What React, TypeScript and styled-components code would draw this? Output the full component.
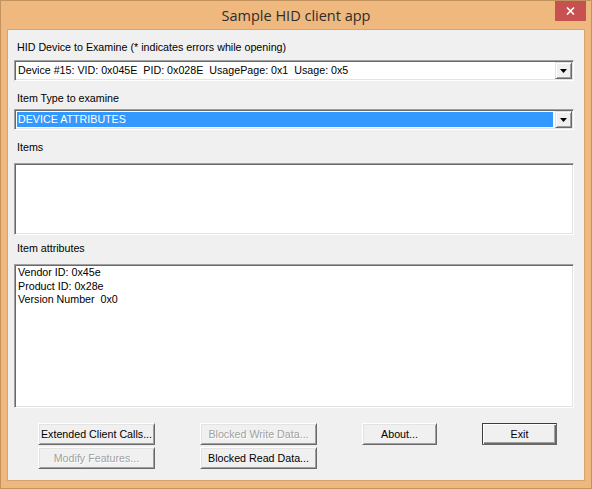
import React from "react";
import styled, { createGlobalStyle } from "styled-components";

const GlobalStyle = createGlobalStyle`
  html, body {
    margin: 0;
    padding: 0;
    background: #ffffff;
  }
  body {
    font-family: "Liberation Sans", Arial, sans-serif;
    font-size: 10.7px;
    color: #000000;
  }
`;

const StyledWindow = styled.div`
  width: 592px;
  height: 489px;
  box-sizing: border-box;
  border: 1px solid #c2925f;
  background: #eeb87e;
  display: flex;
  flex-direction: column;
  padding: 0 6px 7px;
`;

const StyledTitleBar = styled.div`
  height: 28px;
  flex: none;
  display: grid;
  grid-template-columns: 1fr auto 1fr;
  align-items: start;
`;

const StyledTitle = styled.div`
  grid-column: 2;
  font-family: "Open Sans", "Noto Sans", sans-serif;
  font-size: 14.5px;
  color: #2d2d2d;
  padding-top: 5px;
  line-height: 20px;
`;

const StyledClose = styled.div`
  grid-column: 3;
  justify-self: end;
  width: 31px;
  height: 20px;
  margin-right: -1px;
  background: #c75050;
  display: flex;
  align-items: center;
  justify-content: center;
`;

const StyledClient = styled.div`
  flex: 1;
  border: 1px solid #d4a571;
  background: #f0f0f0;
  display: flex;
  flex-direction: column;
  padding: 0 10px 0 6px;
`;

type LabelProp = { top: number };

const StyledLabel = styled.div<LabelProp>`
  margin-top: ${({ top }) => top}px;
  margin-left: 3px;
  height: 14px;
  line-height: 14px;
  white-space: pre;
`;

const StyledCombo = styled.div<{ top: number }>`
  margin-top: ${({ top }) => top}px;
  height: 21px;
  box-sizing: border-box;
  display: flex;
  background: #ffffff;
  border-top: 1px solid #a0a0a0;
  border-left: 1px solid #a0a0a0;
  border-right: 1px solid #ffffff;
  border-bottom: 1px solid #ffffff;
  box-shadow: inset 1px 1px 0 #696969, inset -1px -1px 0 #e3e3e3;
  padding: 1px;
`;

const StyledComboText = styled.div<{ selected?: boolean }>`
  flex: 1;
  margin: 1px 2px 1px 1px;
  padding-left: 1px;
  line-height: 15px;
  white-space: pre;
  background: ${({ selected }) => (selected ? "#3399ff" : "transparent")};
  color: ${({ selected }) => (selected ? "#ffffff" : "#000000")};
`;

const StyledArrowBtn = styled.div`
  width: 17px;
  height: 17px;
  box-sizing: border-box;
  background: #f0f0f0;
  border-top: 1px solid #e3e3e3;
  border-left: 1px solid #e3e3e3;
  border-right: 1px solid #696969;
  border-bottom: 1px solid #696969;
  box-shadow: inset 1px 1px 0 #ffffff, inset -1px -1px 0 #a0a0a0;
  display: flex;
  align-items: center;
  justify-content: center;
`;

const StyledList = styled.div<{ top: number; h: number }>`
  margin-top: ${({ top }) => top}px;
  height: ${({ h }) => h}px;
  box-sizing: border-box;
  background: #ffffff;
  border-top: 1px solid #a0a0a0;
  border-left: 1px solid #a0a0a0;
  border-right: 1px solid #ffffff;
  border-bottom: 1px solid #ffffff;
  box-shadow: inset 1px 1px 0 #696969, inset -1px -1px 0 #e3e3e3;
  padding: 1px 3px;
  line-height: 13.5px;
  white-space: pre;
`;

const StyledButtons = styled.div`
  margin-top: 15px;
  display: flex;
  gap: 45px;
  padding-left: 24px;
`;

const StyledColumn = styled.div`
  display: flex;
  flex-direction: column;
  gap: 2px;
`;

type BtnProp = { w: number; disabled?: boolean; isDefault?: boolean };

const StyledButton = styled.div<BtnProp>`
  width: ${({ w }) => w}px;
  height: 22px;
  box-sizing: border-box;
  background: #f0f0f0;
  display: flex;
  align-items: center;
  justify-content: center;
  border: 1px solid ${({ isDefault }) => (isDefault ? "#3c3c3c" : "transparent")};
  border-top-color: ${({ isDefault }) => (isDefault ? "#3c3c3c" : "#ffffff")};
  border-left-color: ${({ isDefault }) => (isDefault ? "#3c3c3c" : "#ffffff")};
  border-right-color: #696969;
  border-bottom-color: #696969;
  box-shadow: ${({ isDefault }) =>
    isDefault
      ? "inset 1px 1px 0 #ffffff, inset -1px -1px 0 #696969, inset -2px -2px 0 #a0a0a0"
      : "inset 1px 1px 0 #e3e3e3, inset -1px -1px 0 #a0a0a0"};
  color: ${({ disabled }) => (disabled ? "#a0a0a0" : "#000000")};
  text-shadow: ${({ disabled }) => (disabled ? "1px 1px 0 #ffffff" : "none")};
  white-space: pre;
`;

const Arrow = () => (
  <svg width="7" height="4" viewBox="0 0 7 4">
    <path d="M0 0h7L3.5 4z" fill="#000" />
  </svg>
);

const Combo = ({ top, text, selected }: { top: number; text: string; selected?: boolean }) => (
  <StyledCombo top={top}>
    <StyledComboText selected={selected}>{text}</StyledComboText>
    <StyledArrowBtn>
      <Arrow />
    </StyledArrowBtn>
  </StyledCombo>
);

export default function App() {
  return (
    <>
      <GlobalStyle />
      <StyledWindow>
        <StyledTitleBar>
          <StyledTitle>Sample HID client app</StyledTitle>
          <StyledClose>
            <svg width="9" height="8" viewBox="0 0 9 8">
              <path d="M1 0.5l7 7M8 0.5l-7 7" stroke="#fff" strokeWidth="1.6" />
            </svg>
          </StyledClose>
        </StyledTitleBar>
        <StyledClient>
          <StyledLabel top={10}>HID Device to Examine (* indicates errors while opening)</StyledLabel>
          <Combo top={6} text="Device #15: VID: 0x045E  PID: 0x028E  UsagePage: 0x1  Usage: 0x5" />
          <StyledLabel top={10}>Item Type to examine</StyledLabel>
          <Combo top={4} text="DEVICE ATTRIBUTES" selected />
          <StyledLabel top={10}>Items</StyledLabel>
          <StyledList top={9} h={72} />
          <StyledLabel top={6}>Item attributes</StyledLabel>
          <StyledList top={9} h={144}>
            <div>Vendor ID: 0x45e</div>
            <div>Product ID: 0x28e</div>
            <div>Version Number  0x0</div>
          </StyledList>
          <StyledButtons>
            <StyledColumn>
              <StyledButton w={117}>Extended Client Calls...</StyledButton>
              <StyledButton w={117} disabled>Modify Features...</StyledButton>
            </StyledColumn>
            <StyledColumn>
              <StyledButton w={117} disabled>Blocked Write Data...</StyledButton>
              <StyledButton w={117}>Blocked Read Data...</StyledButton>
            </StyledColumn>
            <StyledColumn>
              <StyledButton w={75}>About...</StyledButton>
            </StyledColumn>
            <StyledColumn>
              <StyledButton w={75} isDefault>Exit</StyledButton>
            </StyledColumn>
          </StyledButtons>
        </StyledClient>
      </StyledWindow>
    </>
  );
}
